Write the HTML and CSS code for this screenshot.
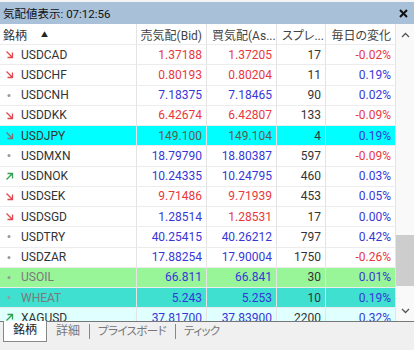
FILE: index.html
```html
<!DOCTYPE html>
<html lang="ja">

<head>
    <meta charset="utf-8">
    <meta name="viewport" content="width=device-width, initial-scale=1.0">
    <title>気配値表示</title>
    <link rel="stylesheet" href="styles.css">
</head>

<body>
    <div class="topstrip"></div>

    <header class="titlebar">
        <span>気配値表示: 07:12:56</span>
        <svg class="close" width="9" height="9" viewBox="0 0 9 9">
            <path d="M1 1 L8 8 M8 1 L1 8" stroke="#111" stroke-width="2" />
        </svg>
    </header>

    <section class="main">
        <div class="list">
            <div class="row head">
                <div class="cell name"><span>銘柄</span><span class="sort">▲</span></div>
                <div class="cell">売気配(Bid)</div>
                <div class="cell left">買気配(As...</div>
                <div class="cell left">スプレ...</div>
                <div class="cell">毎日の変化</div>
            </div>

            <div class="row">
                <div class="cell name"><i class="ico down"></i>USDCAD</div>
                <div class="cell red">1.37188</div>
                <div class="cell red">1.37205</div>
                <div class="cell">17</div>
                <div class="cell red">-0.02%</div>
            </div>
            <div class="row">
                <div class="cell name"><i class="ico down"></i>USDCHF</div>
                <div class="cell red">0.80193</div>
                <div class="cell red">0.80204</div>
                <div class="cell">11</div>
                <div class="cell blue">0.19%</div>
            </div>
            <div class="row">
                <div class="cell name"><i class="ico dot"></i>USDCNH</div>
                <div class="cell blue">7.18375</div>
                <div class="cell blue">7.18465</div>
                <div class="cell">90</div>
                <div class="cell blue">0.02%</div>
            </div>
            <div class="row">
                <div class="cell name"><i class="ico down"></i>USDDKK</div>
                <div class="cell red">6.42674</div>
                <div class="cell red">6.42807</div>
                <div class="cell">133</div>
                <div class="cell red">-0.09%</div>
            </div>
            <div class="row jpy">
                <div class="cell name"><i class="ico down grey"></i>USDJPY</div>
                <div class="cell dim">149.100</div>
                <div class="cell dim">149.104</div>
                <div class="cell">4</div>
                <div class="cell blue">0.19%</div>
            </div>
            <div class="row">
                <div class="cell name"><i class="ico dot"></i>USDMXN</div>
                <div class="cell blue">18.79790</div>
                <div class="cell blue">18.80387</div>
                <div class="cell">597</div>
                <div class="cell red">-0.09%</div>
            </div>
            <div class="row">
                <div class="cell name"><i class="ico up"></i>USDNOK</div>
                <div class="cell blue">10.24335</div>
                <div class="cell blue">10.24795</div>
                <div class="cell">460</div>
                <div class="cell blue">0.03%</div>
            </div>
            <div class="row">
                <div class="cell name"><i class="ico down"></i>USDSEK</div>
                <div class="cell red">9.71486</div>
                <div class="cell red">9.71939</div>
                <div class="cell">453</div>
                <div class="cell blue">0.05%</div>
            </div>
            <div class="row">
                <div class="cell name"><i class="ico down"></i>USDSGD</div>
                <div class="cell blue">1.28514</div>
                <div class="cell red">1.28531</div>
                <div class="cell">17</div>
                <div class="cell blue">0.00%</div>
            </div>
            <div class="row">
                <div class="cell name"><i class="ico dot"></i>USDTRY</div>
                <div class="cell blue">40.25415</div>
                <div class="cell blue">40.26212</div>
                <div class="cell">797</div>
                <div class="cell blue">0.42%</div>
            </div>
            <div class="row">
                <div class="cell name"><i class="ico dot"></i>USDZAR</div>
                <div class="cell blue">17.88254</div>
                <div class="cell blue">17.90004</div>
                <div class="cell">1750</div>
                <div class="cell red">-0.26%</div>
            </div>
            <div class="row oil closed">
                <div class="cell name"><i class="ico dot"></i>USOIL</div>
                <div class="cell blue">66.811</div>
                <div class="cell blue">66.841</div>
                <div class="cell">30</div>
                <div class="cell blue">0.01%</div>
            </div>
            <div class="row wheat closed">
                <div class="cell name"><i class="ico dot"></i>WHEAT</div>
                <div class="cell blue">5.243</div>
                <div class="cell blue">5.253</div>
                <div class="cell">10</div>
                <div class="cell blue">0.19%</div>
            </div>
            <div class="row silver">
                <div class="cell name"><i class="ico up"></i>XAGUSD</div>
                <div class="cell blue">37.81700</div>
                <div class="cell blue">37.83900</div>
                <div class="cell">2200</div>
                <div class="cell blue">0.32%</div>
            </div>
        </div>

        <div class="scrollbar">
            <div class="sbtn">
                <svg width="9" height="6" viewBox="0 0 9 6"><path d="M1 5 L4.5 1.5 L8 5" fill="none" stroke="#555" stroke-width="1.3" /></svg>
            </div>
            <div class="track">
                <div class="thumb"></div>
            </div>
            <div class="sbtn">
                <svg width="9" height="6" viewBox="0 0 9 6"><path d="M1 1 L4.5 4.5 L8 1" fill="none" stroke="#555" stroke-width="1.3" /></svg>
            </div>
        </div>
    </section>

    <footer class="tabs">
        <div class="tab valgt">銘柄</div>
        <div class="tab">詳細</div>
        <div class="tab sep">プライスボード</div>
        <div class="tab sep">ティック</div>
    </footer>
</body>

</html>
```

FILE: styles.css
```css
body {
    margin: 0;
    width: 414px;
    height: 350px;
    overflow: hidden;
    background: #f0f0f0;
    font-family: Roboto, "Noto Sans CJK JP", sans-serif;
    font-size: 12px;
    color: #333;
}

.topstrip {
    height: 2px;
    background: #f4f4f4;
}

.titlebar {
    height: 22px;
    background: #a9c0d9;
    display: flex;
    align-items: center;
    justify-content: space-between;
    padding: 0 6px 0 3px;
    font-size: 11.5px;
    color: #111;
}

.main {
    display: flex;
    height: 297px;
    background: #fff;
}

.list {
    width: 396px;
    overflow: hidden;
}

.row {
    display: grid;
    grid-template-columns: 137px 70px 70px 49px 70px;
    height: 20.25px;
}

.row.head {
    height: 21px;
}

.cell {
    display: flex;
    align-items: center;
    justify-content: flex-end;
    padding: 0 4px 0 2px;
    border-right: 1px solid #e4e4e4;
    border-bottom: 1px solid #ececec;
    white-space: nowrap;
    overflow: hidden;
}

.cell.left {
    justify-content: flex-start;
    padding-left: 5px;
}

.head .cell {
    color: #444;
    font-feature-settings: "palt";
}

.cell.name {
    justify-content: flex-start;
    padding-left: 5px;
    color: #333;
}

.head .cell.name {
    padding-left: 3px;
}

.sort {
    font-size: 7px;
    margin-left: 14px;
    color: #222;
}

.red {
    color: #e8383d;
}

.blue {
    color: #3737d8;
}

.dim {
    color: #5c5c4c;
}

.ico {
    display: inline-block;
    width: 9px;
    height: 9px;
    margin-right: 7px;
    background-repeat: no-repeat;
    background-position: center;
}

.ico.down {
    background-image: url("data:image/svg+xml,%3Csvg xmlns='http://www.w3.org/2000/svg' width='9' height='9'%3E%3Cpath d='M1.5 1.5 L7 7 M7.5 2.5 L7.5 7.5 L2.5 7.5' fill='none' stroke='%23e0484c' stroke-width='1.3'/%3E%3C/svg%3E");
}

.ico.down.grey {
    background-image: url("data:image/svg+xml,%3Csvg xmlns='http://www.w3.org/2000/svg' width='9' height='9'%3E%3Cpath d='M1.5 1.5 L7 7 M7.5 2.5 L7.5 7.5 L2.5 7.5' fill='none' stroke='%23807070' stroke-width='1.3'/%3E%3C/svg%3E");
}

.ico.up {
    background-image: url("data:image/svg+xml,%3Csvg xmlns='http://www.w3.org/2000/svg' width='9' height='9'%3E%3Cpath d='M1.5 7.5 L7 2 M2.5 1.5 L7.5 1.5 L7.5 6.5' fill='none' stroke='%2330a050' stroke-width='1.3'/%3E%3C/svg%3E");
}

.ico.dot {
    background-image: url("data:image/svg+xml,%3Csvg xmlns='http://www.w3.org/2000/svg' width='9' height='9'%3E%3Ccircle cx='4' cy='4.5' r='1.5' fill='%23999'/%3E%3C/svg%3E");
}

.jpy .cell {
    background: #00ffff;
}

.oil .cell {
    background: #98f598;
}

.wheat .cell {
    background: #40e0d0;
}

.silver .cell {
    background: #e0ffff;
}

.closed .cell.name {
    color: #7a7a7a;
}

.scrollbar {
    width: 18px;
    display: flex;
    flex-direction: column;
    background: #f9f9f9;
}

.sbtn {
    height: 21px;
    display: flex;
    align-items: center;
    justify-content: center;
}

.track {
    flex: 1;
}

.thumb {
    margin-top: 190px;
    height: 51px;
    background: #cdcdcd;
}

.tabs {
    display: flex;
    align-items: flex-start;
    height: 29px;
    padding-left: 3px;
    border-top: 1px solid #777;
    box-sizing: border-box;
    font-feature-settings: "palt";
    color: #777;
}

.tab {
    height: 19px;
    line-height: 19px;
    padding: 0 9px;
}

.tab.valgt {
    background: #fff;
    color: #222;
    border: 1px solid #888;
    border-top: none;
    padding: 0 9px;
    margin-top: -1px;
    height: 20px;
}

.tab.sep {
    border-left: 1px solid #888;
    height: 15px;
    line-height: 15px;
    margin-top: 2px;
    padding: 0 9px 0 8px;
    font-size: 11.5px;
    letter-spacing: -0.6px;
}
```
